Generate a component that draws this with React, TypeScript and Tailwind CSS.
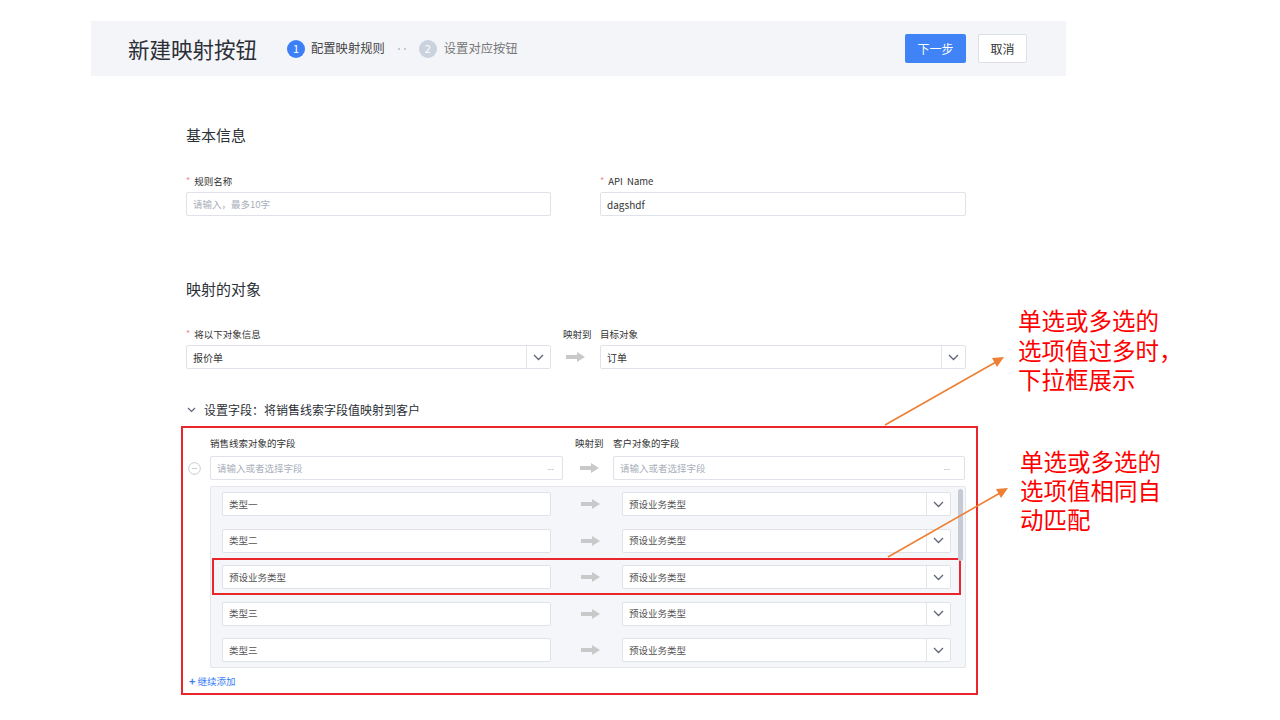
import React from "react";

const font = "font-['Noto_Sans_CJK_SC','Noto_Sans',sans-serif]";

function Arrow() {
  return (
    <svg width="19" height="10" viewBox="0 0 19 10">
      <rect x="0" y="3" width="12" height="4" fill="#c9c9c9" />
      <polygon points="11,0 19,5 11,10" fill="#c9c9c9" />
    </svg>
  );
}

function Chevron() {
  return (
    <svg width="11" height="7" viewBox="0 0 11 7">
      <path d="M1 1 L5.5 5.5 L10 1" fill="none" stroke="#5d6576" strokeWidth="1.3" />
    </svg>
  );
}

function Select({ value, w }: { value: string; w: string }) {
  return (
    <div className={`${w} h-[24px] bg-white border border-[#dfe2e8] rounded-[2px] flex items-center`}>
      <span className="flex-1 pl-[6px] text-[10px] text-[#333]">{value}</span>
      <div className="w-[24px] h-full border-l border-[#e3e6ec] flex items-center justify-center">
        <Chevron />
      </div>
    </div>
  );
}

function Label({ text, star }: { text: string; star?: boolean }) {
  return (
    <div className="h-[14px] leading-[14px] text-[9.5px] text-[#333] flex items-center">
      {star && <span className="text-[#f58b8b] text-[9px] mr-[4px]">*</span>}
      {text}
    </div>
  );
}

const rows = ["类型一", "类型二", "预设业务类型", "类型三", "类型三"];

export default function App() {
  return (
    <div className={`w-[1280px] h-[720px] bg-white relative overflow-hidden pt-[21px] ${font}`}>
      {/* Header */}
      <div className="ml-[91px] w-[975px] h-[55px] bg-[#f4f5f9] flex items-center pl-[37px] pr-[39px]">
        <div className="text-[21.5px] text-[#2b2f36] leading-none">新建映射按钮</div>
        <div className="ml-[30px] flex items-center">
          <span className="w-[18px] h-[18px] rounded-full bg-[#3d7ff6] text-white text-[11px] flex items-center justify-center">1</span>
          <span className="ml-[6px] text-[12.3px] text-[#444]">配置映射规则</span>
          <span className="ml-[13px] flex gap-[4px]">
            <span className="w-[2px] h-[2px] bg-[#c3cad6]" />
            <span className="w-[2px] h-[2px] bg-[#c3cad6]" />
          </span>
          <span className="ml-[13px] w-[18px] h-[18px] rounded-full bg-[#cad2de] text-white text-[11px] flex items-center justify-center">2</span>
          <span className="ml-[7px] text-[12.3px] text-[#777]">设置对应按钮</span>
        </div>
        <div className="ml-auto flex items-center gap-[12px]">
          <button className="w-[61px] h-[29px] rounded-[2px] bg-[#4083f7] text-white text-[12px]">下一步</button>
          <button className="w-[49px] h-[29px] rounded-[2px] bg-white border border-[#dde0e6] text-[#333] text-[12px]">取消</button>
        </div>
      </div>

      <div className="ml-[186px] w-[780px]">
        {/* 基本信息 */}
        <div className="mt-[49px] text-[15px] leading-[20px] text-[#2b2f36]">基本信息</div>
        <div className="mt-[29px] flex gap-[49px]">
          <div className="w-[365px]">
            <Label text="规则名称" star />
            <div className="mt-[4px] h-[24px] border border-[#dfe2e8] rounded-[2px] flex items-center pl-[6px] text-[9.5px] text-[#aab0ba]">
              请输入，最多10字
            </div>
          </div>
          <div className="w-[366px]">
            <Label text={"API\u00a0\u00a0Name"} star />
            <div className="mt-[4px] h-[24px] border border-[#dfe2e8] rounded-[2px] flex items-center pl-[6px] text-[10px] text-[#333]">
              dagshdf
            </div>
          </div>
        </div>

        {/* 映射的对象 */}
        <div className="mt-[63px] text-[15px] leading-[20px] text-[#2b2f36]">映射的对象</div>
        <div className="mt-[28px] flex">
          <div className="w-[365px]">
            <Label text="将以下对象信息" star />
            <div className="mt-[4px]">
              <Select value="报价单" w="w-[365px]" />
            </div>
          </div>
          <div className="w-[49px]">
            <div className="pl-[12px]"><Label text="映射到" /></div>
            <div className="mt-[4px] h-[24px] flex items-center justify-center">
              <Arrow />
            </div>
          </div>
          <div className="w-[366px]">
            <Label text="目标对象" />
            <div className="mt-[4px]">
              <Select value="订单" w="w-[366px]" />
            </div>
          </div>
        </div>

        {/* 设置字段 */}
        <div className="mt-[33px] h-[16px] flex items-center text-[12px] text-[#2b2f36]">
          <svg width="9" height="6" viewBox="0 0 9 6" className="ml-[1px] mr-[8px]">
            <path d="M1 1 L4.5 4.5 L8 1" fill="none" stroke="#5d6576" strokeWidth="1.2" />
          </svg>
          设置字段：将销售线索字段值映射到客户
        </div>

        <div className="mt-[8px] -ml-[5px] w-[797px] h-[269px] border-2 border-[#e8262c] pt-[8px]">
          <div className="flex">
            <div className="w-[27px]" />
            <div className="w-[353px]"><Label text="销售线索对象的字段" /></div>
            <div className="w-[50px] pl-[12px]"><Label text="映射到" /></div>
            <div className="w-[352px]"><Label text="客户对象的字段" /></div>
          </div>
          <div className="mt-[6px] flex items-center">
            <div className="w-[27px] flex justify-end pr-[9px]">
              <svg width="13" height="13" viewBox="0 0 13 13">
                <circle cx="6.5" cy="6.5" r="5.8" fill="none" stroke="#c2c6cd" strokeWidth="0.9" />
                <line x1="3.8" y1="6.5" x2="9.2" y2="6.5" stroke="#c2c6cd" strokeWidth="0.9" />
              </svg>
            </div>
            <div className="w-[353px] h-[24px] border border-[#dfe2e8] rounded-[2px] flex items-center pl-[6px] pr-[8px] text-[9.5px] text-[#aab0ba]">
              <span className="flex-1">请输入或者选择字段</span>
              <span className="text-[#b8bcc4]">--</span>
            </div>
            <div className="w-[50px] flex justify-center pl-[2px]"><Arrow /></div>
            <div className="w-[352px] h-[24px] border border-[#dfe2e8] rounded-[2px] flex items-center pl-[6px] pr-[14px] text-[9.5px] text-[#aab0ba]">
              <span className="flex-1">请输入或者选择字段</span>
              <span className="text-[#b8bcc4]">--</span>
            </div>
          </div>

          <div className="mt-[6px] ml-[27px] w-[756px] h-[182px] bg-[#f5f6f9] border border-[#e3e6eb] rounded-[2px] pt-[5px] pl-[11px] flex flex-col gap-[12.5px] relative">
            {rows.map((r, i) => (
              <div key={i} className="flex items-center relative">
                {i === 2 && (
                  <span className="absolute -left-[10px] -top-[7px] w-[749px] h-[37px] border-2 border-[#e8262c]" />
                )}
                <div className="w-[329px] h-[24px] bg-white border border-[#dfe2e8] rounded-[2px] flex items-center pl-[6px] text-[9.5px] text-[#555]">
                  {r}
                </div>
                <div className="w-[71px] flex justify-center pl-[8px]"><Arrow /></div>
                <div className="w-[329px] h-[24px] bg-white border border-[#dfe2e8] rounded-[2px] flex items-center">
                  <span className="flex-1 pl-[6px] text-[9.5px] text-[#555]">预设业务类型</span>
                  <div className="w-[24px] h-full border-l border-[#e3e6ec] flex items-center justify-center">
                    <Chevron />
                  </div>
                </div>
              </div>
            ))}
            <span className="absolute right-[2px] top-[2px] w-[5px] h-[72px] rounded-full bg-[#c5cad3]" />
          </div>

          <div className="mt-[6px] ml-[6px] h-[14px] flex items-center text-[9.5px] text-[#3d7ff6]">
            <span className="text-[11px] font-bold mr-[2px] leading-none">+</span>继续添加
          </div>
        </div>
      </div>

      {/* Annotations */}
      <div className="absolute left-[1018px] top-[306px] text-[23.5px] leading-[29.5px] text-[#ff0000]">
        单选或多选的<br />选项值过多时，<br />下拉框展示
      </div>
      <div className="absolute left-[1020px] top-[447px] text-[23.5px] leading-[29px] text-[#ff0000]">
        单选或多选的<br />选项值相同自<br />动匹配
      </div>
      <svg className="absolute inset-0 pointer-events-none" width="1280" height="720">
        <line x1="885" y1="425" x2="996" y2="362" stroke="#ee7f33" strokeWidth="1.6" />
        <polygon points="1004,357 992,358 997,367" fill="#ee7f33" />
        <line x1="888" y1="557" x2="1000" y2="493" stroke="#ee7f33" strokeWidth="1.6" />
        <polygon points="1008,488 996,489 1001,498" fill="#ee7f33" />
      </svg>
    </div>
  );
}
